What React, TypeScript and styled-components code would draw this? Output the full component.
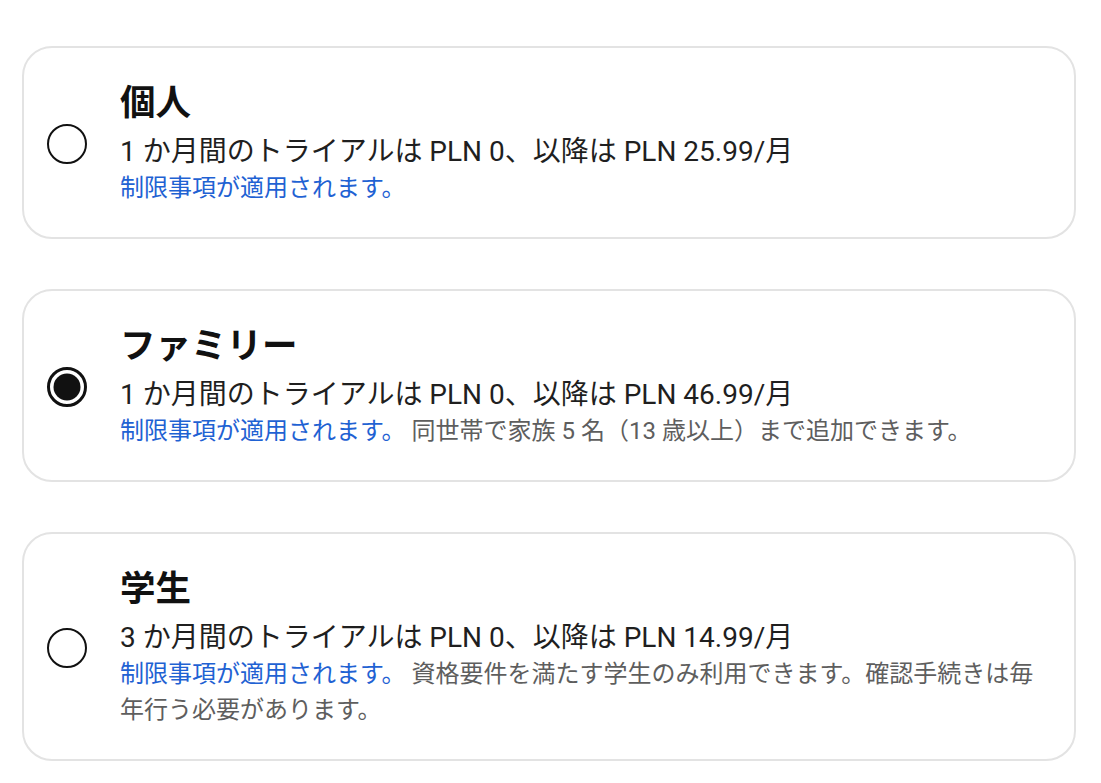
import React, { useState } from 'react';
import styled, { createGlobalStyle } from 'styled-components';

interface Plan {
    id: string;
    title: string;
    price: string;
    note?: string;
}

const plans: Plan[] = [
    {
        id: 'individual',
        title: '個人',
        price: '1 か月間のトライアルは PLN 0、以降は PLN 25.99/月'
    },
    {
        id: 'family',
        title: 'ファミリー',
        price: '1 か月間のトライアルは PLN 0、以降は PLN 46.99/月',
        note: '同世帯で家族 5 名（13 歳以上）まで追加できます。'
    },
    {
        id: 'student',
        title: '学生',
        price: '3 か月間のトライアルは PLN 0、以降は PLN 14.99/月',
        note: '資格要件を満たす学生のみ利用できます。確認手続きは毎年行う必要があります。'
    }
];

const GlobalStyle = createGlobalStyle`
    body {
        margin: 0;
        background: #ffffff;
        font-family: Roboto, "Noto Sans CJK JP", sans-serif;
    }
`;

const ListStyles = styled.div`
    display: flex;
    flex-direction: column;
    gap: 50px;
    padding: 46px 25px 20px 22px;
`;

const CardStyles = styled.label`
    display: flex;
    align-items: center;
    gap: 33px;
    padding: 33px 30px 31px 23px;
    border: 2px solid #e3e3e3;
    border-radius: 30px;
    background: #ffffff;
    cursor: pointer;
`;

const RadioStyles = styled.span<{ $checked: boolean }>`
    position: relative;
    flex: none;
    box-sizing: border-box;
    width: 40px;
    height: 40px;
    border: ${({ $checked }) => ($checked ? '3px' : '2px')} solid #111111;
    border-radius: 50%;

    &::after {
        content: '';
        display: ${({ $checked }) => ($checked ? 'block' : 'none')};
        position: absolute;
        left: 50%;
        top: 50%;
        width: 27px;
        height: 27px;
        border-radius: 50%;
        background: #111111;
        transform: translate(-50%, -50%);
    }
`;

const TextStyles = styled.div`
    flex: 1;
    min-width: 0;
`;

const TitleStyles = styled.div`
    font-size: 35.5px;
    line-height: 44px;
    font-weight: 700;
    color: #111111;
`;

const PriceStyles = styled.div`
    margin-top: 9px;
    font-size: 28px;
    line-height: 36px;
    color: #1f1f1f;
`;

const DetailsStyles = styled.div`
    font-size: 24px;
    line-height: 36px;
    color: #5e5e5e;
`;

const LinkStyles = styled.a`
    color: #1f62d3;
    text-decoration: none;
`;

const PlanCard: React.FC<Plan & { checked: boolean; onSelect: () => void }> = ({
    title,
    price,
    note,
    checked,
    onSelect
}) => {
    return (
        <CardStyles onClick={onSelect}>
            <RadioStyles $checked={checked} role="radio" aria-checked={checked}/>
            <TextStyles>
                <TitleStyles>{title}</TitleStyles>
                <PriceStyles>{price}</PriceStyles>
                <DetailsStyles>
                    <LinkStyles href="#">制限事項が適用されます。</LinkStyles>
                    {note && <> {note}</>}
                </DetailsStyles>
            </TextStyles>
        </CardStyles>
    );
};

const App: React.FC = () => {
    const [selected, setSelected] = useState('family');

    return (
        <>
            <GlobalStyle/>
            <ListStyles>
                {plans.map(plan => (
                    <PlanCard
                        key={plan.id}
                        {...plan}
                        checked={selected === plan.id}
                        onSelect={() => setSelected(plan.id)}
                    />
                ))}
            </ListStyles>
        </>
    );
};

export default App;
